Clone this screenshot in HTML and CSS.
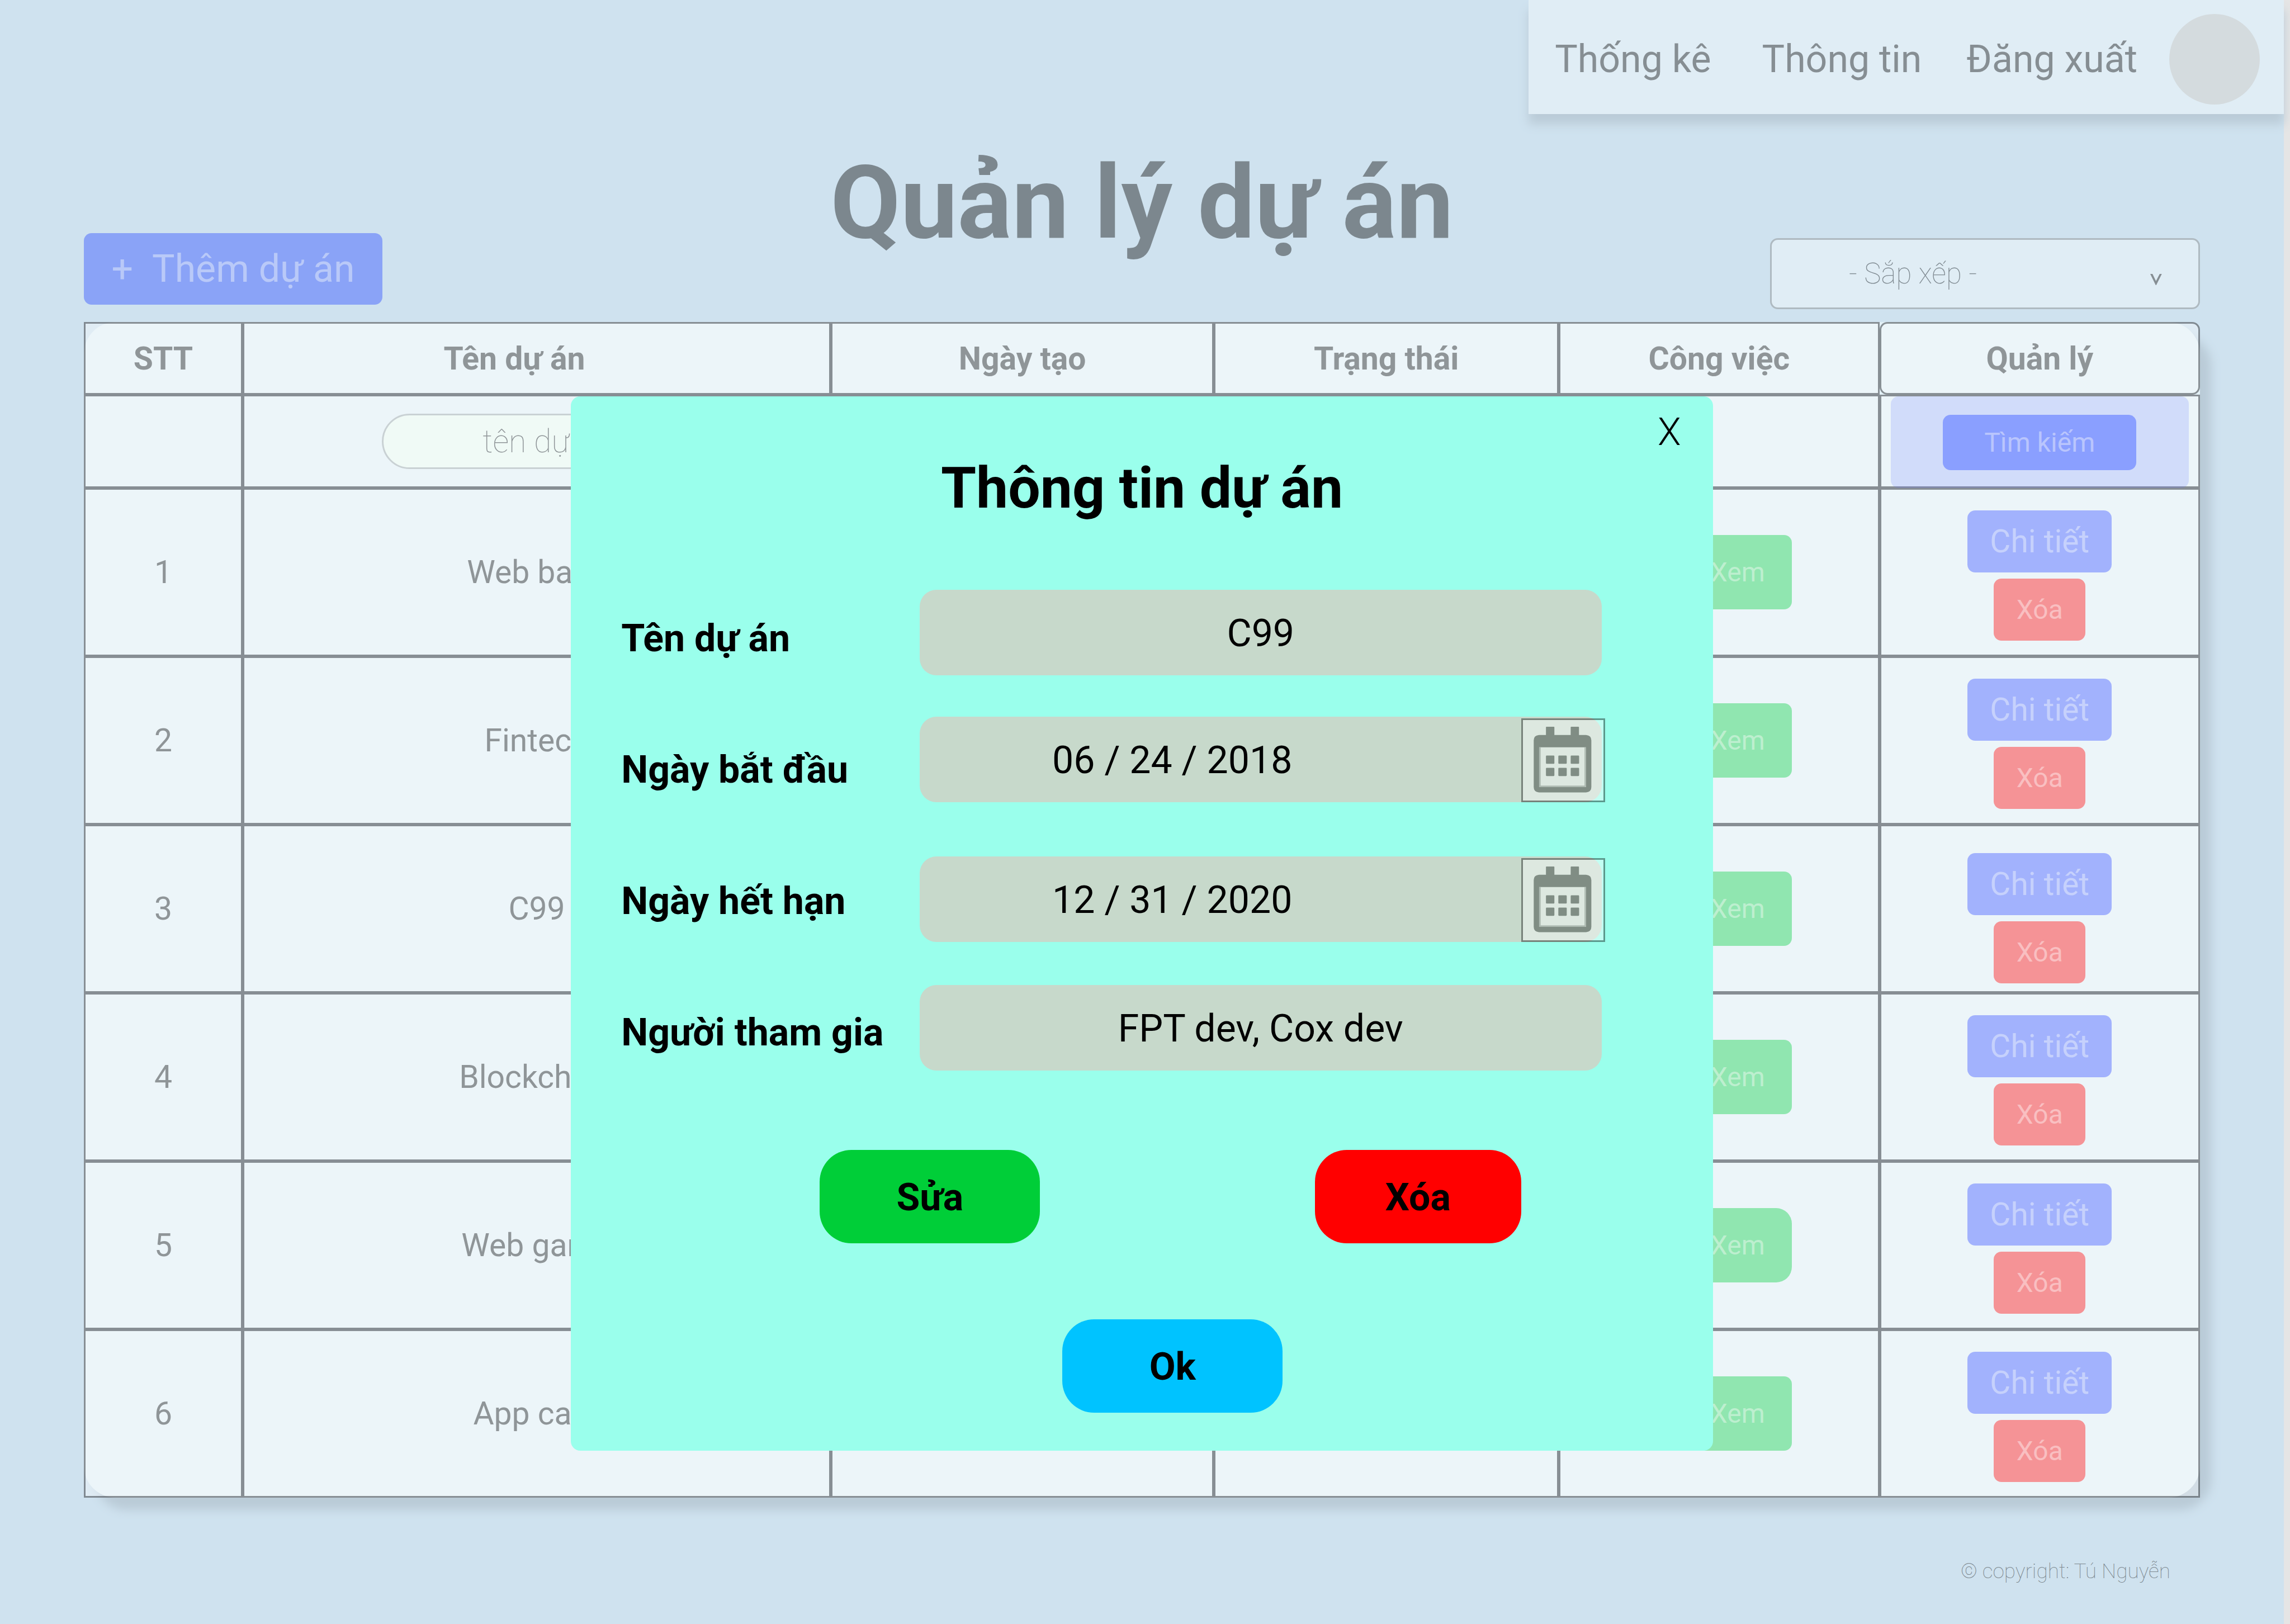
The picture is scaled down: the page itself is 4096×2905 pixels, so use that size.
FILE: index.html
```html
<!DOCTYPE html>
<html lang="vi">
<head>
<meta charset="utf-8">
<meta name="viewport" content="width=device-width, initial-scale=1">
<title>Quản lý dự án</title>
<link rel="stylesheet" href="styles.css">
</head>
<body>
<div class="page">
  <nav class="nav">
    <a class="nav-link nav-link-wide" href="#thong-ke">Thống kê</a>
    <a class="nav-link" href="#thong-tin">Thông tin</a>
    <a class="nav-link" href="#dang-xuat">Đăng xuất</a>
    <span class="avatar"></span>
  </nav>

  <header class="toolbar">
    <button class="add" type="button"><span>+</span><span>Thêm dự án</span></button>
    <h1 class="title">Quản lý dự án</h1>
    <div class="sort">
      <select class="sort-select" aria-label="Sắp xếp">
        <option>- Sắp xếp -</option>
      </select>
      <svg class="sort-arrow" viewBox="0 0 88 84" aria-hidden="true"><path fill="#868e93" d="M0 0H17L43 54L71 0H87L45 84H41Z"/></svg>
    </div>
  </header>

  <main class="content">
    <table class="projects">
      <colgroup>
        <col class="col-index"><col class="col-name"><col class="col-date"><col class="col-status"><col class="col-tasks"><col class="col-manage">
      </colgroup>
      <thead>
        <tr>
          <th>STT</th>
          <th class="name-head">Tên dự án</th>
          <th>Ngày tạo</th>
          <th>Trạng thái</th>
          <th>Công việc</th>
          <th class="manage-head">Quản lý</th>
        </tr>
      </thead>
      <tbody>
        <tr class="filter">
          <td></td>
          <td><input class="search" type="text" placeholder="tên dự án" aria-label="Tên dự án cần tìm"></td>
          <td></td>
          <td></td>
          <td></td>
          <td><div class="search-panel"><button class="search-button" type="button">Tìm kiếm</button></div></td>
        </tr>
        <tr>
          <td>1</td><td>Web bank</td><td></td><td></td>
          <td><button class="view" type="button">Xem</button></td>
          <td><div class="actions"><button class="detail" type="button">Chi tiết</button><button class="remove" type="button">Xóa</button></div></td>
        </tr>
        <tr>
          <td>2</td><td>Fintech</td><td></td><td></td>
          <td><button class="view" type="button">Xem</button></td>
          <td><div class="actions"><button class="detail" type="button">Chi tiết</button><button class="remove" type="button">Xóa</button></div></td>
        </tr>
        <tr>
          <td>3</td><td>C99</td><td></td><td></td>
          <td><button class="view" type="button">Xem</button></td>
          <td><div class="actions actions-low"><button class="detail" type="button">Chi tiết</button><button class="remove" type="button">Xóa</button></div></td>
        </tr>
        <tr>
          <td>4</td><td>Blockchain</td><td></td><td></td>
          <td><button class="view" type="button">Xem</button></td>
          <td><div class="actions"><button class="detail" type="button">Chi tiết</button><button class="remove" type="button">Xóa</button></div></td>
        </tr>
        <tr>
          <td>5</td><td>Web game</td><td></td><td></td>
          <td><button class="view view-round" type="button">Xem</button></td>
          <td><div class="actions"><button class="detail" type="button">Chi tiết</button><button class="remove" type="button">Xóa</button></div></td>
        </tr>
        <tr>
          <td>6</td><td>App card</td><td></td><td></td>
          <td><button class="view" type="button">Xem</button></td>
          <td><div class="actions"><button class="detail" type="button">Chi tiết</button><button class="remove" type="button">Xóa</button></div></td>
        </tr>
      </tbody>
    </table>
  </main>

  <footer class="footer">© copyright: Tú Nguyễn</footer>

  <section class="dialog" role="dialog" aria-labelledby="dialog-title">
    <button class="close" type="button" aria-label="Đóng">X</button>
    <h2 class="dialog-title" id="dialog-title">Thông tin dự án</h2>
    <form class="form">
      <div class="labels">
        <label for="name">Tên dự án</label>
        <label for="start">Ngày bắt đầu</label>
        <label for="end">Ngày hết hạn</label>
        <label for="members">Người tham gia</label>
      </div>
      <div class="fields">
        <input class="field" id="name" type="text" value="C99">
        <div class="date date-start">
          <input class="field field-date" id="start" type="text" value="06 / 24 / 2018">
          <button class="calendar" type="button" aria-label="Chọn ngày bắt đầu">
            <svg class="calendar-icon" viewBox="12 12 612 612" aria-hidden="true">
              <path fill="#808d84" fill-rule="evenodd" d="M134 126H187V67Q187 63 191 63H247Q251 63 251 67V126H375V67Q375 63 379 63H434Q438 63 438 67V126H492Q532 130 532 166V522Q532 558 492 562H134Q94 558 94 522V166Q94 130 134 126ZM135 219V522H491V219Z"/>
              <path fill="#aebbb2" fill-rule="evenodd" d="M135 219H491V522H135ZM147 219V510H480V219Z"/>
              <g fill="#808d84"><rect x="187" y="282" width="64" height="63" rx="6"/><rect x="281" y="282" width="64" height="63" rx="6"/><rect x="375" y="282" width="64" height="63" rx="6"/><rect x="187" y="375" width="64" height="63" rx="6"/><rect x="281" y="375" width="64" height="63" rx="6"/><rect x="375" y="375" width="64" height="63" rx="6"/></g>
            </svg>
          </button>
        </div>
        <div class="date date-end">
          <input class="field field-date" id="end" type="text" value="12 / 31 / 2020">
          <button class="calendar" type="button" aria-label="Chọn ngày hết hạn">
            <svg class="calendar-icon" viewBox="12 12 612 612" aria-hidden="true">
              <path fill="#808d84" fill-rule="evenodd" d="M134 126H187V67Q187 63 191 63H247Q251 63 251 67V126H375V67Q375 63 379 63H434Q438 63 438 67V126H492Q532 130 532 166V522Q532 558 492 562H134Q94 558 94 522V166Q94 130 134 126ZM135 219V522H491V219Z"/>
              <path fill="#aebbb2" fill-rule="evenodd" d="M135 219H491V522H135ZM147 219V510H480V219Z"/>
              <g fill="#808d84"><rect x="187" y="282" width="64" height="63" rx="6"/><rect x="281" y="282" width="64" height="63" rx="6"/><rect x="375" y="282" width="64" height="63" rx="6"/><rect x="187" y="375" width="64" height="63" rx="6"/><rect x="281" y="375" width="64" height="63" rx="6"/><rect x="375" y="375" width="64" height="63" rx="6"/></g>
            </svg>
          </button>
        </div>
        <input class="field" id="members" type="text" value="FPT dev, Cox dev">
      </div>
    </form>
    <div class="choices">
      <button class="choice edit" type="button">Sửa</button>
      <button class="choice delete" type="button">Xóa</button>
    </div>
    <button class="choice ok" type="button">Ok</button>
  </section>
</div>
</body>
</html>
```

FILE: styles.css
```css
* {
  box-sizing: border-box;
}

body {
  margin: 0;
  padding-right: 11px;
  background: #e5e5e5;
  font-family: Roboto, "Noto Sans", sans-serif;
}

button,
input,
select {
  margin: 0;
  padding: 0;
  border: 0;
  font-family: inherit;
  text-align: center;
}

.page {
  position: relative;
  display: flex;
  flex-direction: column;
  min-height: 100vh;
  background: #cfe2ef;
}

/* Top navigation */
.nav {
  display: flex;
  align-items: center;
  align-self: flex-end;
  height: 204px;
  padding: 8px 43px 0 47px;
  background: #e0edf5;
  box-shadow: 0 18px 17px #bacbd7;
}

.nav-link {
  margin-right: 57px;
  color: #868e93;
  font-size: 68px;
  line-height: 80px;
  text-decoration: none;
}

.nav-link + .nav-link {
  margin-right: 80px;
}

.nav-link + .nav-link + .nav-link {
  margin-right: 57px;
}

.nav-link-wide {
  margin-right: 91px;
}

.avatar {
  width: 162px;
  height: 162px;
  border-radius: 50%;
  background: #d4dbde;
}

/* Heading and list controls */
.toolbar {
  display: grid;
  grid-template-columns: 1fr auto 1fr;
  align-items: end;
  height: 372px;
  padding: 0 150px;
}

.title {
  align-self: start;
  margin: 68px 0 0;
  color: #7c878e;
  font-size: 182px;
  line-height: 182px;
}

.add {
  display: flex;
  align-items: center;
  justify-content: center;
  justify-self: start;
  gap: 34px;
  width: 534px;
  height: 128px;
  margin-bottom: 31px;
  border-radius: 14px;
  background: #8aa3f7;
  color: #b9c9f8;
  font-size: 68px;
}

.sort {
  position: relative;
  justify-self: end;
  width: 769px;
  height: 127px;
  margin-bottom: 23px;
}

.sort-select {
  width: 100%;
  height: 100%;
  padding-left: 138px;
  appearance: none;
  border: 3px solid #afbac1;
  border-radius: 14px;
  background: #e0edf5;
  color: #7f8a91;
  font-size: 51px;
  font-weight: 100;
  text-align: left;
}

.sort-arrow {
  position: absolute;
  top: 64px;
  right: 68px;
  width: 21px;
  height: 20px;
}

/* Project list */
.content {
  padding: 0 150px;
}

.projects {
  width: 100%;
  table-layout: fixed;
  border-collapse: separate;
  border-spacing: 0;
  border-radius: 57px;
  background: #e2f0f6;
  box-shadow: 20px 22px 17px #bacbd7;
  color: #8f9598;
  font-size: 57px;
  text-align: center;
}

.col-index { width: 7.5%; }
.col-name { width: 27.8%; }
.col-date { width: 18.1%; }
.col-status { width: 16.3%; }
.col-tasks { width: 15.15%; }
.col-manage { width: 15.15%; }

th,
td {
  height: 301px;
  padding: 0;
  border: 3px solid rgba(2, 8, 14, .43);
  background: rgba(255, 255, 255, .35);
}

th {
  height: 130px;
}

.name-head {
  padding-right: 80px;
}

.manage-head {
  border-radius: 14px;
}

.filter td {
  height: 167px;
}

.search {
  display: block;
  width: 553px;
  height: 99px;
  margin: 0 auto;
  padding-left: 36px;
  border: 3px solid #c9d1d4;
  border-radius: 50px;
  background: #f0faf6;
  color: #8f9598;
  font-size: 57px;
  font-weight: 100;
}

.search::placeholder {
  color: #8f9598;
  opacity: 1;
}

.search-panel {
  display: flex;
  align-items: center;
  justify-content: center;
  height: 164px;
  margin: 0 17px -3px;
  border-radius: 14px;
  background: rgba(105, 120, 255, .2);
}

.search-button {
  width: 346px;
  height: 99px;
  border-radius: 14px;
  background: #8a9fff;
  color: #b9c5fd;
  font-size: 48px;
}

.view {
  width: 194px;
  height: 133px;
  margin-left: 67px;
  border-radius: 14px;
  background: #90e6b0;
  color: #bdefcf;
  font-size: 48px;
}

.view-round {
  border-radius: 28px;
}

.actions {
  display: flex;
  flex-direction: column;
  align-items: center;
  gap: 11px;
  padding-top: 11px;
}

.actions-low {
  padding-top: 33px;
}

.detail,
.remove {
  width: 258px;
  height: 111px;
  border-radius: 14px;
  background: #a2b2fd;
  color: #c6d1fc;
  font-size: 57px;
}

.remove {
  width: 164px;
  background: #f59396;
  color: #f9bfc1;
  font-size: 48px;
}

.footer {
  margin: 108px 203px 0 0;
  color: #7c878e;
  font-size: 37px;
  font-weight: 100;
  line-height: 48px;
  text-align: right;
}

/* Project details dialog */
.dialog {
  position: absolute;
  top: 709px;
  left: 25%;
  display: flex;
  flex-direction: column;
  width: 50%;
  padding: 24px 0 68px;
  border-radius: 17px;
  background: #9affec;
  color: #000;
}

.close {
  align-self: flex-end;
  width: 80px;
  height: 80px;
  margin-right: 38px;
  background: none;
  color: #000;
  font-size: 68px;
  font-weight: 300;
  line-height: 80px;
}

.dialog-title {
  margin: 0;
  font-size: 102px;
  line-height: 120px;
  text-align: center;
}

.form {
  display: flex;
  justify-content: space-between;
  padding: 122px 199px 0 90px;
}

.labels {
  display: flex;
  flex-direction: column;
  gap: 155px;
  padding-top: 47px;
  font-size: 68px;
  font-weight: 700;
  line-height: 80px;
}

.fields {
  display: flex;
  flex-direction: column;
  width: 1220px;
}

.field {
  width: 100%;
  height: 153px;
  padding-top: 3px;
  border-radius: 30px;
  background: #c7d9cb;
  color: #000;
  font-size: 68px;
}

.field-date {
  padding-right: 316px;
}

.date {
  position: relative;
  display: flex;
  margin-bottom: 77px;
}

.date-start {
  margin: 74px 0 97px;
}

.calendar {
  position: absolute;
  right: -6px;
  bottom: 0;
  width: 150px;
  height: 150px;
  border: 3px solid rgba(0, 0, 0, .4);
  background: rgba(255, 255, 255, .4);
  background-clip: padding-box;
}

.calendar-icon {
  display: block;
  width: 100%;
  height: 100%;
}

.choices {
  display: flex;
  justify-content: space-between;
  padding: 142px 343px 136px 445px;
}

.choice {
  width: 394px;
  height: 167px;
  padding-top: 2px;
  border-radius: 57px;
  color: #000;
  font-size: 68px;
  font-weight: 700;
}

.edit {
  background: #00ce38;
}

.delete {
  width: 369px;
  background: #f00;
}

.ok {
  margin-left: 879px;
  background: #00c3ff;
}
```
